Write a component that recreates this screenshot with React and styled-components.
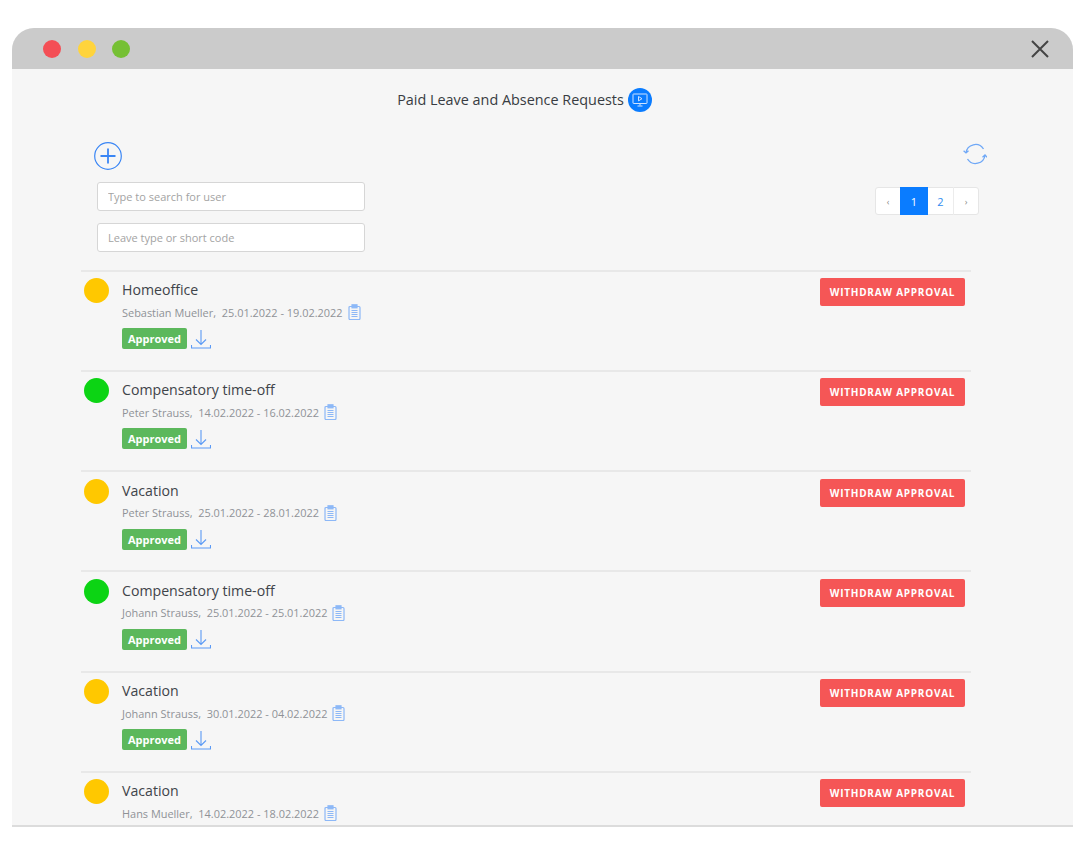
import React from 'react'
import styled, { createGlobalStyle } from 'styled-components'

const GlobalStyle = createGlobalStyle`
  html, body {
    margin: 0;
    background: #fff;
    font-family: "Open Sans", "Noto Sans", sans-serif;
  }
`

const Win = styled.div`
  box-sizing: border-box;
  width: 1061px;
  height: 799px;
  margin: 28px 0 0 12px;
  background: #f6f6f6;
  border-radius: 22px 22px 0 0;
  border-bottom: 2px solid #dcdcdc;
  overflow: hidden;
`
const TitleBar = styled.div`
  display: flex;
  align-items: center;
  gap: 16.5px;
  height: 41px;
  padding: 0 24px 0 31px;
  background: #cbcbcb;
`
const Light = styled.span`
  width: 18px;
  height: 18px;
  border-radius: 50%;
  background: ${p => p.$color};
`
const Close = styled.svg`
  margin-left: auto;
  width: 18px;
  height: 18px;
`
const Heading = styled.div`
  display: flex;
  justify-content: center;
  align-items: center;
  gap: 4px;
  height: 24px;
  margin-top: 19px;
  padding-right: 36px;
  font-size: 14.4px;
  font-weight: 500;
  color: #383c42;
`
const HeadingText = styled.span`
  margin-bottom: 2px;
`
const Badge = styled.span`
  display: flex;
  align-items: center;
  justify-content: center;
  width: 24px;
  height: 24px;
  border-radius: 50%;
  background: #0a7cff;
`
const Toolbar = styled.div`
  display: flex;
  justify-content: space-between;
  margin-top: 30px;
  padding: 0 86px 0 82px;
`
const Filters = styled.div`
  display: flex;
  flex-direction: column;
  align-items: flex-start;
  gap: 12px;
`
const Search = styled.input`
  box-sizing: border-box;
  width: 268px;
  height: 29px;
  margin-left: 3px;
  padding: 0 10px;
  border: 1px solid #d6d6d6;
  border-radius: 3px;
  background: #fff;
  font: 400 11px "Open Sans", sans-serif;
  outline: none;
  &::placeholder { color: #a3a3a3; opacity: 1; }
`
const Side = styled.div`
  display: flex;
  flex-direction: column;
  align-items: flex-end;
`
const Pager = styled.div`
  display: flex;
  height: 28px;
  margin: 21px 8px 0 0;
  border: 1px solid #e6e6e6;
  border-radius: 3px;
  background: #fff;
  box-sizing: border-box;
`
const PageCell = styled.span`
  display: flex;
  align-items: center;
  justify-content: center;
  width: ${p => p.$w}px;
  margin: -1px 0;
  font-size: ${p => (p.$arrow ? 9 : 11)}px;
  color: ${p => (p.$active ? '#fff' : p.$arrow ? '#8a8a8a' : '#2f8cf0')};
  background: ${p => (p.$active ? '#0a7cff' : 'transparent')};
  border-right: ${p => (p.$sep ? '1px solid #ececec' : '0')};
  box-sizing: border-box;
`
const List = styled.div`
  width: 890px;
  margin: 17.5px 0 0 69px;
`
const Row = styled.div`
  box-sizing: border-box;
  display: flex;
  align-items: flex-start;
  height: 100.3px;
  padding: 6.5px 6px 0 2.5px;
  border-top: 2px solid #e8e8e8;
`
const Dot = styled.span`
  flex: none;
  width: 25px;
  height: 25px;
  margin-right: 13.5px;
  border-radius: 50%;
  background: ${p => p.$color};
`
const Info = styled.div`
  flex: 1;
  min-width: 0;
`
const Name = styled.div`
  height: 24px;
  font-size: 14.15px;
  line-height: 24px;
  color: #3f444a;
`
const Meta = styled.div`
  display: flex;
  align-items: center;
  height: 20px;
  font-size: 10.95px;
  color: #8f9296;
  white-space: pre;
`
const Status = styled.div`
  display: flex;
  align-items: center;
  gap: 4px;
  margin-top: 6px;
`
const Approved = styled.span`
  display: flex;
  align-items: center;
  justify-content: center;
  width: 65px;
  height: 21px;
  border-radius: 2px;
  background: #5cb85c;
  color: #fff;
  font-size: 11px;
  font-weight: 700;
`
const Withdraw = styled.button`
  flex: none;
  width: 145px;
  height: 28px;
  padding: 0;
  border: 0;
  border-radius: 2px;
  background: #f55656;
  color: #fff;
  font: 700 10px "Open Sans", sans-serif;
  letter-spacing: 0.75px;
`
const ClipIcon = styled.svg`
  margin-left: 5px;
  width: 13px;
  height: 16px;
`

const Clipboard = () => (
  <ClipIcon viewBox="0 0 13 16" fill="none" stroke="#8db8f7" strokeWidth="1.2">
    <rect x="1" y="2.5" width="11" height="13" rx="1" />
    <rect x="4" y="0.8" width="5" height="3" fill="#8db8f7" />
    <path d="M3.5 6.5h6M3.5 8.5h6M3.5 10.5h6M3.5 12.5h6" strokeWidth="1" />
  </ClipIcon>
)

const Download = () => (
  <svg width="20" height="20" viewBox="0 0 20 20" fill="none" stroke="#5b9af5" strokeWidth="1.1">
    <path d="M10 1v14M5 10.5l5 5 5-5" />
    <path d="M.5 16v3h19v-3" />
  </svg>
)

const Refresh = () => (
  <svg width="24" height="24" viewBox="0 0 24 24" fill="none" stroke="#6fa8f7" strokeWidth="1.3">
    <path d="M3 11A9.5 9.5 0 0 1 20.5 7" />
    <path d="M22 13A9.5 9.5 0 0 1 4.5 17" />
    <path d="M.6 8.8L3 11l2.5-2.2M19.5 15.2L22 13l2 2.2" />
  </svg>
)

const requests = [
  { type: 'Homeoffice', person: 'Sebastian Mueller', range: '25.01.2022 - 19.02.2022', color: '#ffc800', approved: true },
  { type: 'Compensatory time-off', person: 'Peter Strauss', range: '14.02.2022 - 16.02.2022', color: '#0cd414', approved: true },
  { type: 'Vacation', person: 'Peter Strauss', range: '25.01.2022 - 28.01.2022', color: '#ffc800', approved: true },
  { type: 'Compensatory time-off', person: 'Johann Strauss', range: '25.01.2022 - 25.01.2022', color: '#0cd414', approved: true },
  { type: 'Vacation', person: 'Johann Strauss', range: '30.01.2022 - 04.02.2022', color: '#ffc800', approved: true },
  { type: 'Vacation', person: 'Hans Mueller', range: '14.02.2022 - 18.02.2022', color: '#ffc800', approved: false },
]

const App = () => (
  <>
    <GlobalStyle />
    <Win>
      <TitleBar>
        <Light $color="#f44f56" />
        <Light $color="#ffd43c" />
        <Light $color="#76c034" />
        <Close viewBox="0 0 18 18" fill="none" stroke="#444" strokeWidth="2">
          <path d="M1 1l16 16M17 1L1 17" />
        </Close>
      </TitleBar>
      <Heading>
        <HeadingText>Paid Leave and Absence Requests</HeadingText>
        <Badge>
          <svg width="16" height="16" viewBox="0 0 16 16" fill="none" stroke="#cfe3ff" strokeWidth="1">
            <rect x="1" y="2" width="14" height="9.5" rx="0.5" />
            <path d="M6.5 4.5l3.5 2.2-3.5 2.2z" />
            <path d="M8 11.5v2M5.5 14h5" />
          </svg>
        </Badge>
      </Heading>
      <Toolbar>
        <Filters>
          <svg width="28" height="28" viewBox="0 0 28 28" fill="none" stroke="#3a86f5">
            <circle cx="14" cy="14" r="13.3" strokeWidth="1.2" />
            <path d="M14 6.5v15M6.5 14h15" strokeWidth="1.8" />
          </svg>
          <Search placeholder="Type to search for user" />
          <Search placeholder="Leave type or short code" />
        </Filters>
        <Side>
          <Refresh />
          <Pager>
            <PageCell $w={24} $arrow>‹</PageCell>
            <PageCell $w={28} $active>1</PageCell>
            <PageCell $w={26} $sep>2</PageCell>
            <PageCell $w={24} $arrow>›</PageCell>
          </Pager>
        </Side>
      </Toolbar>
      <List>
        {requests.map((r, i) => (
          <Row key={i}>
            <Dot $color={r.color} />
            <Info>
              <Name>{r.type}</Name>
              <Meta>
                {r.person},{'  '}{r.range}
                <Clipboard />
              </Meta>
              {r.approved && (
                <Status>
                  <Approved>Approved</Approved>
                  <Download />
                </Status>
              )}
            </Info>
            <Withdraw>WITHDRAW APPROVAL</Withdraw>
          </Row>
        ))}
      </List>
    </Win>
  </>
)

export default App
